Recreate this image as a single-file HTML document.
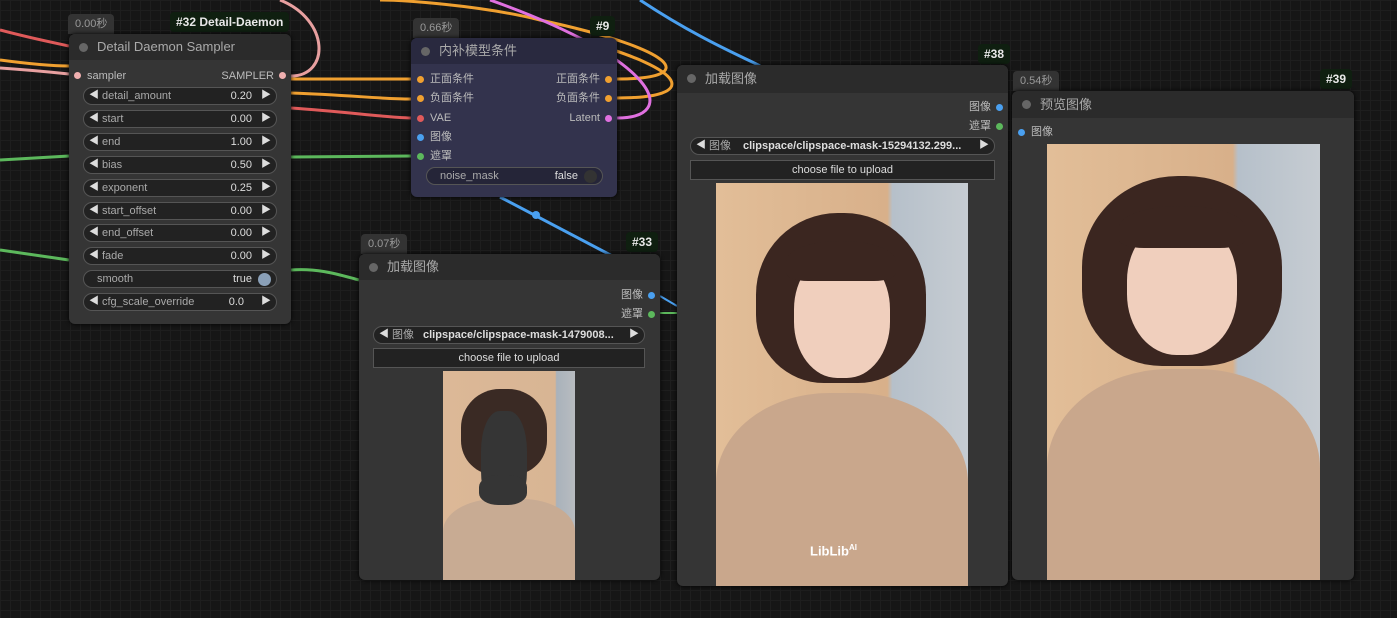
<!DOCTYPE html>
<html><head><meta charset="utf-8"><style>
*{box-sizing:border-box;margin:0;padding:0}
body{width:1397px;height:618px;overflow:hidden;background:#161616;font-family:"Liberation Sans","Noto Sans CJK SC",sans-serif;position:relative;
background-image:linear-gradient(#1e1e1e 1px,transparent 1px),linear-gradient(90deg,#1e1e1e 1px,transparent 1px);background-size:10px 10px}
.abs{position:absolute}
.node{position:absolute;background:#353535;border-radius:6px;box-shadow:0 0 4px #000}
.title{height:26px;background:#2b2b2b;border-radius:6px 6px 0 0;color:#aaa;font-size:13px;line-height:26px;padding-left:28px;position:relative}
.title:before{content:"";position:absolute;left:10px;top:9px;width:9px;height:9px;border-radius:50%;background:#666}
.badge{position:absolute;background:#333;color:#999;font-size:11px;padding:0 7px;height:20px;line-height:20px;border-radius:4px 4px 0 0}
.tag{position:absolute;background:#0f1f10;color:#e8e8e8;font-size:12px;font-weight:bold;padding:0 6px;height:20px;line-height:20px;border-radius:4px}
.w{position:absolute;height:18px;border:1px solid #555;background:#222;border-radius:9px;color:#aaa;font-size:11px;line-height:16px}
.w .l{position:absolute;left:18px}.w .v{position:absolute;right:24px;color:#ddd}
.w .al{position:absolute;left:5px;color:#ddd;font-size:10px}.w .ar{position:absolute;right:5px;color:#ddd;font-size:10px}
.slot{position:absolute;font-size:11px;color:#bbb;line-height:14px}
.dot{position:absolute;width:7px;height:7px;border-radius:50%}
.btn{position:absolute;height:20px;background:#222;border:1px solid #555;color:#ddd;font-size:11px;text-align:center;line-height:18px}
</style></head><body>
<svg class="abs" style="left:0;top:0" width="1397" height="618">
<g fill="none" stroke-width="3">
<path d="M0 30 C30 38 50 42 69 46" stroke="#e05a5a"/>
<path d="M0 60 C30 64 50 66 69 66" stroke="#f0a030"/>
<path d="M0 68 C30 70 50 72 69 74" stroke="#e8a0a0"/>
<path d="M0 160 L69 156" stroke="#5cb85c"/>
<path d="M0 250 L69 260" stroke="#5cb85c"/>
<path d="M291 76 C330 76 330 20 280 0" stroke="#e8a0a0"/>
<path d="M291 79 L411 79" stroke="#f0a030"/>
<path d="M291 93 C350 95 380 99 411 99" stroke="#f0a030"/>
<path d="M291 108 C350 112 380 117 411 118" stroke="#e05a5a"/>
<path d="M291 157 L411 156" stroke="#5cb85c"/>
<path d="M291 270 C320 268 340 275 359 280" stroke="#5cb85c"/>
<path d="M617 79 C700 79 680 50 540 20 C480 5 400 0 380 0" stroke="#f0a030"/>
<path d="M617 98 C700 98 690 70 580 40" stroke="#f0a030"/>
<path d="M617 118 C680 118 660 60 490 0" stroke="#e070e0"/>
<path d="M500 197 L620 260" stroke="#4aa0f0"/>
<path d="M640 0 C700 40 750 60 760 66" stroke="#4aa0f0"/>
<path d="M660 296 L677 306" stroke="#4aa0f0" stroke-width="2"/>
<path d="M660 313 L677 313" stroke="#5cb85c" stroke-width="2"/>
</g>
<circle cx="536" cy="215" r="4" fill="#4aa0f0"/>
</svg>

<!-- node 32 -->
<div class="badge" style="left:68px;top:14px">0.00秒</div>
<div class="tag" style="left:170px;top:12px">#32 Detail-Daemon</div>
<div class="node" style="left:69px;top:34px;width:222px;height:290px">
<div class="title">Detail Daemon Sampler</div>
<div class="dot" style="left:5px;top:38px;background:#f0b0b0"></div><div class="slot" style="left:18px;top:35px">sampler</div>
<div class="slot" style="right:17px;top:35px">SAMPLER</div><div class="dot" style="right:5px;top:38px;background:#f0b0b0"></div>
</div>
<div class="w" style="left:83px;top:87px;width:194px"><span class="al">◀</span><span class="l">detail_amount</span><span class="v">0.20</span><span class="ar">▶</span></div>
<div class="w" style="left:83px;top:110px;width:194px"><span class="al">◀</span><span class="l">start</span><span class="v">0.00</span><span class="ar">▶</span></div>
<div class="w" style="left:83px;top:133px;width:194px"><span class="al">◀</span><span class="l">end</span><span class="v">1.00</span><span class="ar">▶</span></div>
<div class="w" style="left:83px;top:156px;width:194px"><span class="al">◀</span><span class="l">bias</span><span class="v">0.50</span><span class="ar">▶</span></div>
<div class="w" style="left:83px;top:179px;width:194px"><span class="al">◀</span><span class="l">exponent</span><span class="v">0.25</span><span class="ar">▶</span></div>
<div class="w" style="left:83px;top:202px;width:194px"><span class="al">◀</span><span class="l">start_offset</span><span class="v">0.00</span><span class="ar">▶</span></div>
<div class="w" style="left:83px;top:224px;width:194px"><span class="al">◀</span><span class="l">end_offset</span><span class="v">0.00</span><span class="ar">▶</span></div>
<div class="w" style="left:83px;top:247px;width:194px"><span class="al">◀</span><span class="l">fade</span><span class="v">0.00</span><span class="ar">▶</span></div>
<div class="w" style="left:83px;top:270px;width:194px"><span class="l" style="left:13px">smooth</span><span class="v">true</span><span style="position:absolute;right:5px;top:2px;width:13px;height:13px;border-radius:50%;background:#8aa0b8"></span></div>
<div class="w" style="left:83px;top:293px;width:194px"><span class="al">◀</span><span class="l">cfg_scale_override</span><span class="v" style="right:32px">0.0</span><span class="ar">▶</span></div>

<!-- node 9 -->
<div class="badge" style="left:413px;top:18px">0.66秒</div>
<div class="tag" style="left:590px;top:16px">#9</div>
<div class="node" style="left:411px;top:38px;width:206px;height:159px;background:#33334d">
<div class="title" style="background:#29293f">内补模型条件</div>
<div class="dot" style="left:6px;top:38px;background:#f0a030"></div><div class="slot" style="left:19px;top:34px">正面条件</div>
<div class="slot" style="right:17px;top:34px">正面条件</div><div class="dot" style="right:5px;top:38px;background:#f0a030"></div>
<div class="dot" style="left:6px;top:57px;background:#f0a030"></div><div class="slot" style="left:19px;top:53px">负面条件</div>
<div class="slot" style="right:17px;top:53px">负面条件</div><div class="dot" style="right:5px;top:57px;background:#f0a030"></div>
<div class="dot" style="left:6px;top:77px;background:#e05a5a"></div><div class="slot" style="left:19px;top:73px">VAE</div>
<div class="slot" style="right:17px;top:73px">Latent</div><div class="dot" style="right:5px;top:77px;background:#e070e0"></div>
<div class="dot" style="left:6px;top:96px;background:#4aa0f0"></div><div class="slot" style="left:19px;top:92px">图像</div>
<div class="dot" style="left:6px;top:115px;background:#5cb85c"></div><div class="slot" style="left:19px;top:111px">遮罩</div>
<div class="w" style="left:15px;top:129px;width:177px;background:#252538"><span class="l" style="left:13px">noise_mask</span><span class="v">false</span><span style="position:absolute;right:5px;top:2px;width:13px;height:13px;border-radius:50%;background:#333"></span></div>
</div>

<!-- node 33 -->
<div class="badge" style="left:361px;top:234px">0.07秒</div>
<div class="tag" style="left:626px;top:232px">#33</div>
<div class="node" style="left:359px;top:254px;width:301px;height:326px">
<div class="title">加载图像</div>
<div class="slot" style="right:17px;top:34px">图像</div><div class="dot" style="right:5px;top:38px;background:#4aa0f0"></div>
<div class="slot" style="right:17px;top:53px">遮罩</div><div class="dot" style="right:5px;top:57px;background:#5cb85c"></div>
</div>
<div class="w" style="left:373px;top:326px;width:272px;color:#ddd"><span class="al">◀</span><span class="l" style="color:#aaa">图像</span><span class="l" style="left:49px;font-weight:bold">clipspace/clipspace-mask-1479008...</span><span class="ar">▶</span></div>
<div class="btn" style="left:373px;top:348px;width:272px">choose file to upload</div>
<div class="abs" style="left:443px;top:371px;width:132px;height:209px;background:linear-gradient(90deg,#dcb897 0%,#d8b594 85%,#a9b2bb 86%,#b8bcc0 100%)">
<div class="abs" style="left:18px;top:18px;width:86px;height:86px;border-radius:45% 45% 40% 40%;background:#3a2a24"></div>
<div class="abs" style="left:38px;top:40px;width:46px;height:100px;border-radius:40%;background:#353535"></div>
<div class="abs" style="left:0;top:128px;width:132px;height:81px;border-radius:40% 40% 0 0;background:#c8ab93"></div>
<div class="abs" style="left:36px;top:104px;width:48px;height:30px;border-radius:40%;background:#353535"></div>
</div>

<!-- node 38 -->
<div class="tag" style="left:978px;top:44px">#38</div>
<div class="node" style="left:677px;top:65px;width:331px;height:521px">
<div class="title" style="height:28px;line-height:28px">加载图像</div>
<div class="slot" style="right:17px;top:35px">图像</div><div class="dot" style="right:5px;top:39px;background:#4aa0f0"></div>
<div class="slot" style="right:17px;top:54px">遮罩</div><div class="dot" style="right:5px;top:58px;background:#5cb85c"></div>
</div>
<div class="w" style="left:690px;top:137px;width:305px;color:#ddd"><span class="al">◀</span><span class="l" style="color:#aaa">图像</span><span class="l" style="left:52px;font-weight:bold">clipspace/clipspace-mask-15294132.299...</span><span class="ar">▶</span></div>
<div class="btn" style="left:690px;top:160px;width:305px">choose file to upload</div>
<div class="abs" style="left:716px;top:183px;width:252px;height:403px;overflow:hidden;background:linear-gradient(90deg,#e2be98 0%,#d8b08a 68%,#b6c0ca 70%,#c6ccd2 100%)">
<div class="abs" style="left:40px;top:30px;width:170px;height:170px;border-radius:48% 48% 40% 40%;background:#3b2620"></div>
<div class="abs" style="left:78px;top:70px;width:96px;height:125px;border-radius:45%;background:#f0cfbd"></div>
<div class="abs" style="left:70px;top:58px;width:110px;height:40px;border-radius:50% 50% 20% 20%;background:#3b2620"></div>
<div class="abs" style="left:0;top:210px;width:252px;height:200px;border-radius:45% 45% 0 0;background:#c9a78c"></div>
<div class="abs" style="left:94px;top:360px;color:#fff;font-size:13px;font-weight:bold">LibLib<sup style="font-size:8px">AI</sup></div>
</div>

<!-- node 39 -->
<div class="badge" style="left:1013px;top:71px">0.54秒</div>
<div class="tag" style="left:1320px;top:69px">#39</div>
<div class="node" style="left:1012px;top:91px;width:342px;height:489px">
<div class="title" style="height:27px;line-height:27px">预览图像</div>
<div class="dot" style="left:6px;top:38px;background:#4aa0f0"></div><div class="slot" style="left:19px;top:34px">图像</div>
</div>
<div class="abs" style="left:1047px;top:144px;width:273px;height:436px;overflow:hidden;background:linear-gradient(90deg,#e2be98 0%,#d8b08a 68%,#b6c0ca 70%,#c6ccd2 100%)">
<div class="abs" style="left:35px;top:32px;width:200px;height:190px;border-radius:48% 48% 40% 40%;background:#3b2620"></div>
<div class="abs" style="left:80px;top:76px;width:110px;height:135px;border-radius:45%;background:#f0cfbd"></div>
<div class="abs" style="left:72px;top:62px;width:126px;height:42px;border-radius:50% 50% 20% 20%;background:#3b2620"></div>
<div class="abs" style="left:0;top:225px;width:273px;height:220px;border-radius:45% 45% 0 0;background:#c9a78c"></div>
</div>
</body></html>
